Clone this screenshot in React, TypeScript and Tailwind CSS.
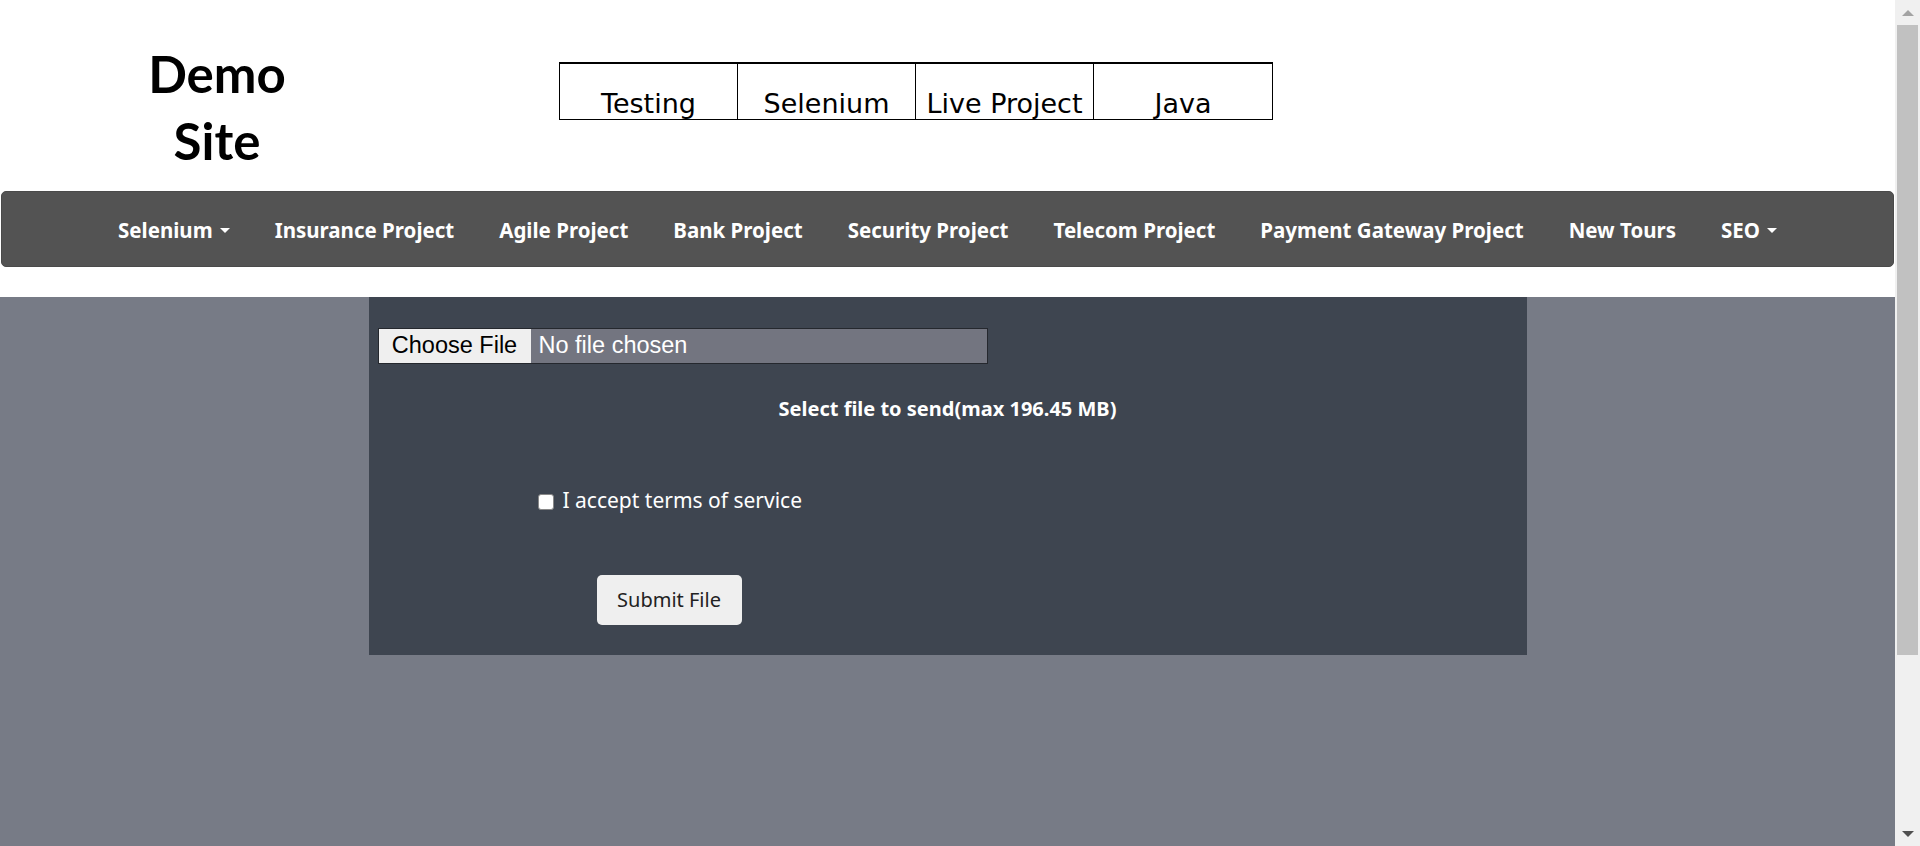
import React from "react";

const tabs = ["Testing", "Selenium", "Live Project", "Java"];

const navItems = [
  { label: "Selenium", caret: true },
  { label: "Insurance Project" },
  { label: "Agile Project" },
  { label: "Bank Project" },
  { label: "Security Project" },
  { label: "Telecom Project" },
  { label: "Payment Gateway Project" },
  { label: "New Tours" },
  { label: "SEO", caret: true },
];

const body = { fontFamily: "'Noto Sans', Lato, sans-serif" };

function Caret() {
  return (
    <span className="ml-[7px] inline-block w-0 h-0 border-l-[5px] border-r-[5px] border-t-[5px] border-l-transparent border-r-transparent border-t-white align-middle" />
  );
}

export default function App() {
  return (
    <div className="flex w-[1920px] h-[846px] overflow-hidden bg-white" style={body}>
      {/* page */}
      <div className="w-[1895px] flex flex-col">
        {/* Header */}
        <header className="h-[191px] flex">
          <div className="w-[434px] pt-[40px] text-center">
            <h1
              className="text-[51px] font-bold leading-[67px] text-black"
              style={{ fontFamily: "Lato, 'Noto Sans', sans-serif" }}
            >
              Demo
              <br />
              Site
            </h1>
          </div>
          <div className="ml-[125px] mt-[62px] flex h-[58px] border border-t-2 border-black">
            {tabs.map((t, i) => (
              <div
                key={t}
                className={
                  "w-[178px] flex items-end justify-center text-[27px] leading-[30px] text-black " +
                  (i < tabs.length - 1 ? "border-r border-black" : "")
                }
                style={{ fontFamily: "'DejaVu Sans', Verdana, sans-serif" }}
              >
                {t}
              </div>
            ))}
          </div>
        </header>

        {/* Nav bar */}
        <nav className="mx-[1px] h-[76px] rounded-[5px] bg-[#535353] border border-[#4a4a4a] flex items-center justify-center gap-[45px] pt-[2px]">
          {navItems.map((n) => (
            <a
              key={n.label}
              className="text-white font-bold text-[20.5px] whitespace-nowrap flex items-center"
            >
              {n.label}
              {n.caret && <Caret />}
            </a>
          ))}
        </nav>

        <div className="h-[30px]" />

        {/* Upload area */}
        <main className="flex-1 bg-[#777b86]">
          <section className="mx-auto w-[1158px] h-[358px] bg-[#3e4550] pt-[31px] px-[9px]">
            <div
              className="flex w-[610px] h-[36px] border border-[#25282e] bg-[#737580] text-[23.5px] leading-none"
              style={{ fontFamily: "'Liberation Sans', Arial, sans-serif" }}
            >
              <span className="w-[152px] bg-[#efefef] text-black flex items-center justify-center">
                Choose File
              </span>
              <span className="pl-[8px] text-white flex items-center">No file chosen</span>
            </div>

            <p className="mt-[31px] text-center text-white font-bold text-[20px] leading-[28px]">
              Select file to send(max 196.45 MB)
            </p>

            <label className="mt-[63px] ml-[160px] flex items-center gap-[9px] text-white text-[21px] leading-[28px]">
              <span className="mt-[4px] w-[16px] h-[16px] rounded-[3px] bg-white border border-[#888]" />
              I accept terms of service
            </label>

            <button className="mt-[61px] ml-[219px] w-[145px] h-[50px] rounded-[5px] bg-[#efefef] text-[#222] text-[20px]">
              Submit File
            </button>
          </section>
        </main>
      </div>

      {/* Scrollbar */}
      <div className="w-[25px] h-full bg-[#f0f0f0] flex flex-col items-center">
        <div className="h-[25px] w-full flex items-center justify-center">
          <span className="w-0 h-0 border-l-[6px] border-r-[6px] border-b-[6px] border-l-transparent border-r-transparent border-b-[#a3a3a3]" />
        </div>
        <div className="w-[21px] h-[630px] bg-[#c1c1c1]" />
        <div className="flex-1" />
        <div className="h-[25px] w-full flex items-center justify-center">
          <span className="w-0 h-0 border-l-[6px] border-r-[6px] border-t-[6px] border-l-transparent border-r-transparent border-t-[#505050]" />
        </div>
      </div>
    </div>
  );
}
